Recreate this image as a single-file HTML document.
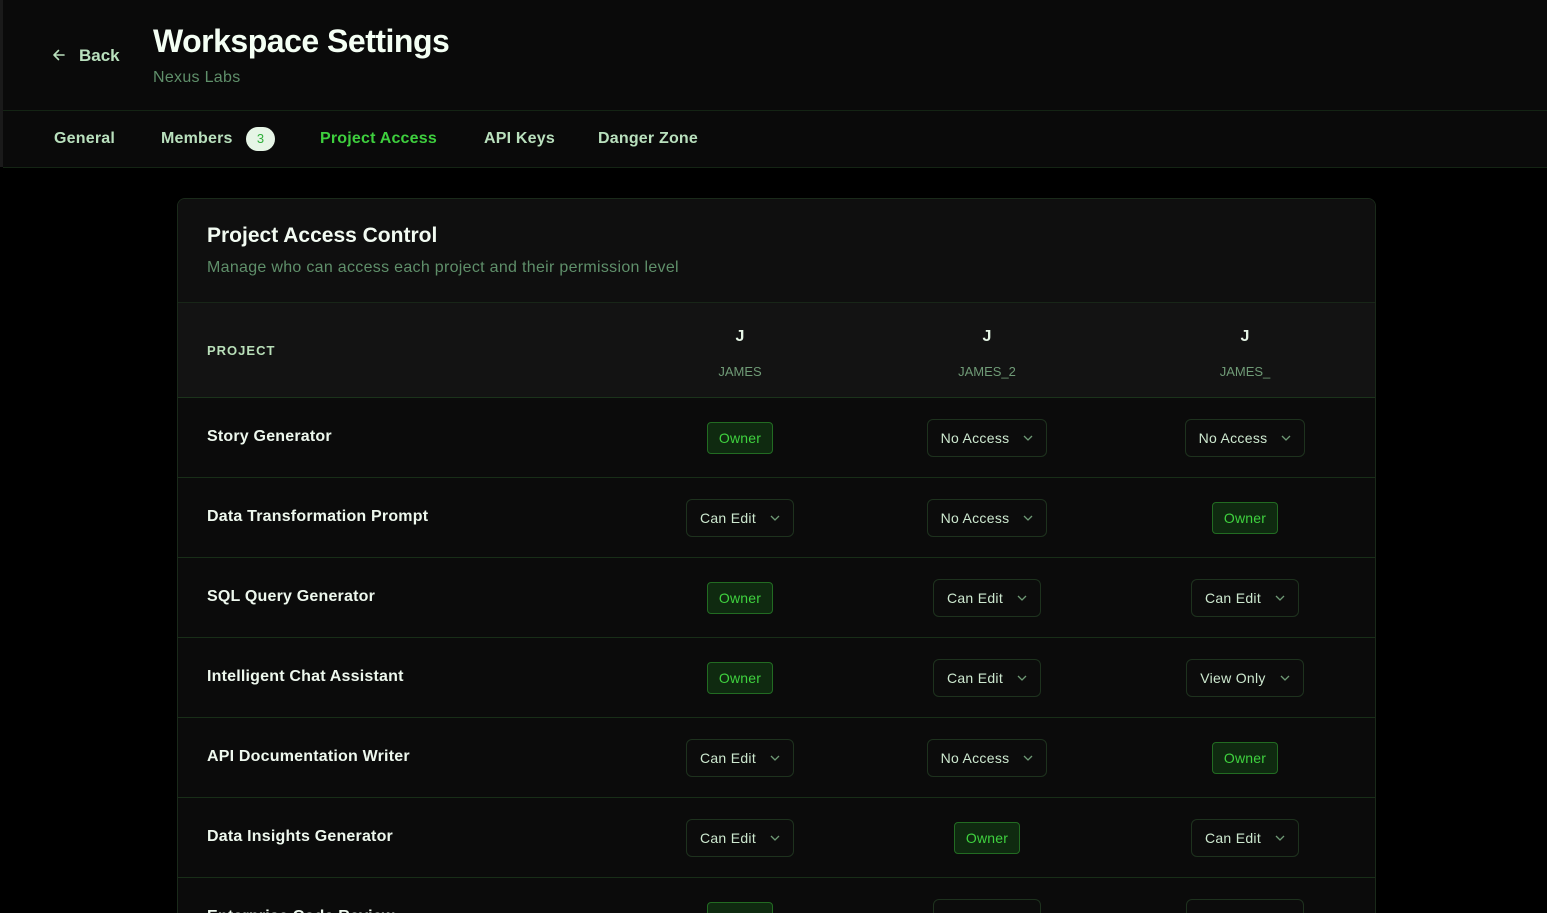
<!DOCTYPE html>
<html style="width:1547px;height:913px;overflow:hidden"><head><style>
*{margin:0;padding:0;box-sizing:border-box}
body{width:1547px;height:913px;overflow:hidden;background:#000;font-family:"Liberation Sans",sans-serif;color:#e6f5e6;position:relative}
.hdr{position:absolute;left:0;top:0;width:1547px;height:167px;background:#0a0a0a;border-left:3px solid #1a1a1a}
.abs{position:absolute;white-space:nowrap}
.line{position:absolute;left:3px;right:0;height:1px;background:#142414}
.nav{font-size:16px;font-weight:bold;color:#b9e0bd;top:130px;letter-spacing:0.2px}
.card{position:absolute;left:177px;top:198px;width:1199px;height:760px;background:#0b0b0b;border:1px solid #1a2a1a;border-radius:8px;overflow:hidden}
.ch{height:104px;background:#0f0f0f;border-bottom:1px solid #182618;position:relative}
.th{height:95px;background:#131313;border-bottom:1px solid #1b331b;position:relative}
.row{height:80px;border-bottom:1px solid #182e18;position:relative}
.pn{position:absolute;left:29px;top:30px;font-size:16px;font-weight:bold;color:#eef8ee;letter-spacing:0.2px}
.cell{position:absolute;top:0;height:79px;display:flex;align-items:center;justify-content:center;width:240px}
.c1{left:442px}.c2{left:689px}.c3{left:947px}
.sel{height:38px;border:1px solid #1e321e;border-radius:6px;padding:0 13px;display:flex;align-items:center;font-size:14px;letter-spacing:0.3px;color:#cde8cf;background:#0c0c0c}
.sel svg{margin-left:14px}
.own{height:32px;border:1px solid #226b22;background:#0f2a10;border-radius:4px;padding:0 11px;display:flex;align-items:center;font-size:14px;letter-spacing:0.2px;color:#3fd23f}
.uh{position:absolute;width:240px;text-align:center}
</style></head><body>
<div class="hdr"></div>
<svg class="abs" style="left:51px;top:47px" width="16" height="16" viewBox="0 0 16 16"><path d="M13 8H3M7.5 3.5L3 8l4.5 4.5" stroke="#b9e0bd" stroke-width="1.6" fill="none" stroke-linecap="round" stroke-linejoin="round"/></svg>
<div class="abs" style="left:79px;top:46px;font-size:17px;font-weight:bold;color:#b9e0bd">Back</div>
<div class="abs" style="left:153px;top:23px;font-size:32px;font-weight:bold;color:#f4fff4;letter-spacing:-0.5px">Workspace Settings</div>
<div class="abs" style="left:153px;top:69px;font-size:16px;color:#5f8f6a;letter-spacing:0.3px">Nexus Labs</div>
<div class="line" style="top:110px"></div>
<div class="line" style="top:167px"></div>
<div class="abs nav" style="left:54px">General</div>
<div class="abs nav" style="left:161px">Members</div>
<div class="abs" style="left:246px;top:127px;width:29px;height:24px;border-radius:12px;background:#e6f5e6;color:#2fae3a;font-size:13px;text-align:center;line-height:24px">3</div>
<div class="abs nav" style="left:320px;color:#3ecf3e">Project Access</div>
<div class="abs nav" style="left:484px">API Keys</div>
<div class="abs nav" style="left:598px">Danger Zone</div>

<div class="card">
<div class="ch"><div class="abs" style="left:29px;top:25px;font-size:21px;font-weight:bold;color:#f2fbf2">Project Access Control</div>
<div class="abs" style="left:29px;top:60px;font-size:16px;color:#5f8f6a;letter-spacing:0.3px">Manage who can access each project and their permission level</div></div>
<div class="th">
<div class="abs" style="left:29px;top:40px;font-size:13px;font-weight:bold;letter-spacing:1px;color:#b9dfb9">PROJECT</div>
<div class="uh" style="left:442px;top:25px;font-size:16px;font-weight:bold">J</div><div class="uh" style="left:442px;top:61px;font-size:13px;color:#6f9a76">JAMES</div>
<div class="uh" style="left:689px;top:25px;font-size:16px;font-weight:bold">J</div><div class="uh" style="left:689px;top:61px;font-size:13px;color:#6f9a76">JAMES_2</div>
<div class="uh" style="left:947px;top:25px;font-size:16px;font-weight:bold">J</div><div class="uh" style="left:947px;top:61px;font-size:13px;color:#6f9a76">JAMES_</div>
</div>
<div class="row"><div class="pn">Story Generator</div><div class="cell c1"><div class="own">Owner</div></div><div class="cell c2"><div class="sel">No Access<svg width="10" height="6"><path d="M1 1l4 4 4-4" stroke="#6f9a76" fill="none" stroke-width="1.3"/></svg></div></div><div class="cell c3"><div class="sel">No Access<svg width="10" height="6"><path d="M1 1l4 4 4-4" stroke="#6f9a76" fill="none" stroke-width="1.3"/></svg></div></div></div>
<div class="row"><div class="pn">Data Transformation Prompt</div><div class="cell c1"><div class="sel">Can Edit<svg width="10" height="6"><path d="M1 1l4 4 4-4" stroke="#6f9a76" fill="none" stroke-width="1.3"/></svg></div></div><div class="cell c2"><div class="sel">No Access<svg width="10" height="6"><path d="M1 1l4 4 4-4" stroke="#6f9a76" fill="none" stroke-width="1.3"/></svg></div></div><div class="cell c3"><div class="own">Owner</div></div></div>
<div class="row"><div class="pn">SQL Query Generator</div><div class="cell c1"><div class="own">Owner</div></div><div class="cell c2"><div class="sel">Can Edit<svg width="10" height="6"><path d="M1 1l4 4 4-4" stroke="#6f9a76" fill="none" stroke-width="1.3"/></svg></div></div><div class="cell c3"><div class="sel">Can Edit<svg width="10" height="6"><path d="M1 1l4 4 4-4" stroke="#6f9a76" fill="none" stroke-width="1.3"/></svg></div></div></div>
<div class="row"><div class="pn">Intelligent Chat Assistant</div><div class="cell c1"><div class="own">Owner</div></div><div class="cell c2"><div class="sel">Can Edit<svg width="10" height="6"><path d="M1 1l4 4 4-4" stroke="#6f9a76" fill="none" stroke-width="1.3"/></svg></div></div><div class="cell c3"><div class="sel">View Only<svg width="10" height="6"><path d="M1 1l4 4 4-4" stroke="#6f9a76" fill="none" stroke-width="1.3"/></svg></div></div></div>
<div class="row"><div class="pn">API Documentation Writer</div><div class="cell c1"><div class="sel">Can Edit<svg width="10" height="6"><path d="M1 1l4 4 4-4" stroke="#6f9a76" fill="none" stroke-width="1.3"/></svg></div></div><div class="cell c2"><div class="sel">No Access<svg width="10" height="6"><path d="M1 1l4 4 4-4" stroke="#6f9a76" fill="none" stroke-width="1.3"/></svg></div></div><div class="cell c3"><div class="own">Owner</div></div></div>
<div class="row"><div class="pn">Data Insights Generator</div><div class="cell c1"><div class="sel">Can Edit<svg width="10" height="6"><path d="M1 1l4 4 4-4" stroke="#6f9a76" fill="none" stroke-width="1.3"/></svg></div></div><div class="cell c2"><div class="own">Owner</div></div><div class="cell c3"><div class="sel">Can Edit<svg width="10" height="6"><path d="M1 1l4 4 4-4" stroke="#6f9a76" fill="none" stroke-width="1.3"/></svg></div></div></div>
<div class="row"><div class="pn">Enterprise Code Review</div><div class="cell c1"><div class="own">Owner</div></div><div class="cell c2"><div class="sel">Can Edit<svg width="10" height="6"><path d="M1 1l4 4 4-4" stroke="#6f9a76" fill="none" stroke-width="1.3"/></svg></div></div><div class="cell c3"><div class="sel">View Only<svg width="10" height="6"><path d="M1 1l4 4 4-4" stroke="#6f9a76" fill="none" stroke-width="1.3"/></svg></div></div></div>
</div>
</body></html>
